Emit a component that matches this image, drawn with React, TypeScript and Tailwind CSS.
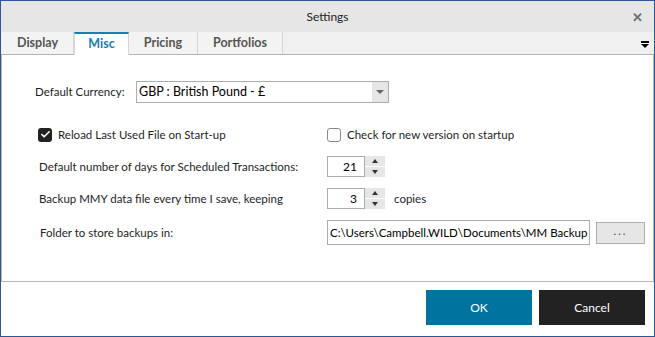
import { Check } from "lucide-react";

const tabs = ["Display", "Misc", "Pricing", "Portfolios"];

const font = { fontFamily: 'Lato, "Noto Sans", sans-serif' };

const Spinner = ({ value }: { value: string }) => {
  return (
    <div className="flex h-[21px] items-stretch">
      <div className="flex w-[38px] items-center justify-end border border-[#adadad] bg-white pr-[7px] text-[12px] text-black">
        {value}
      </div>
      <div className="flex w-[20px] flex-col bg-[#e6e6e6]">
        <div className="flex flex-1 items-center justify-center border-b border-white">
          <span className="block h-0 w-0 border-x-[3px] border-b-[4px] border-x-transparent border-b-[#333]" />
        </div>
        <div className="flex flex-1 items-center justify-center">
          <span className="block h-0 w-0 border-x-[3px] border-t-[4px] border-x-transparent border-t-[#333]" />
        </div>
      </div>
    </div>
  );
};

export default function App() {
  return (
    <div
      className="flex h-[337px] w-[655px] flex-col overflow-hidden whitespace-nowrap border border-[#2b5797] bg-white text-[11.5px] text-[#1e1e1e]"
      style={font}
    >
      {/* title bar */}
      <div className="relative flex h-[31px] flex-none items-center justify-center bg-[#e6e6e6] text-[12px] text-[#222]">
        <span>Settings</span>
        <span className="absolute right-[11px] top-[7px] text-[13px] font-bold text-[#707070]">✕</span>
      </div>

      {/* tab strip */}
      <div className="flex h-[23px] flex-none items-end border-b border-[#b4b4b4] bg-[#f0f0f0] pl-[1px]">
        {tabs.map((tab) => {
          const active = tab === "Misc";
          return (
            <div
              key={tab}
              className={
                active
                  ? "-mb-px flex h-[23px] w-[55px] items-center justify-center border-t-2 border-x border-t-[#1a7fb0] border-x-[#d6d6d6] bg-white text-[12.5px] font-bold text-[#1a7fb0]"
                  : tab === "Display"
                    ? "flex h-[22px] w-[72px] items-center justify-center border-r border-[#d6d6d6] bg-[#f3f3f3] text-[12.5px] font-bold text-[#555]"
                    : tab === "Pricing"
                      ? "flex h-[22px] w-[69px] items-center justify-center border-r border-[#d6d6d6] bg-[#f3f3f3] text-[12.5px] font-bold text-[#555]"
                      : "flex h-[22px] w-[85px] items-center justify-center border-r border-[#d6d6d6] bg-[#f3f3f3] text-[12.5px] font-bold text-[#555]"
              }
            >
              {tab}
            </div>
          );
        })}
        <div className="flex-1" />
        <div className="mb-[6px] mr-[5px] flex flex-col items-center">
          <span className="block h-[2px] w-[8px] bg-black" />
          <span className="mt-[1px] block h-0 w-0 border-x-[4px] border-t-[4px] border-x-transparent border-t-black" />
        </div>
      </div>

      {/* content */}
      <div className="flex h-[227px] flex-none flex-col border-x border-b border-[#b9b9b9] pt-[26px]">
        <div className="flex items-center">
          <span className="ml-[33px] w-[101px]">Default Currency:</span>
          <div className="flex h-[22px] w-[253px] items-stretch border border-[#adadad] bg-white">
            <span className="flex flex-1 items-center pl-[2px] text-[12.5px] text-black">GBP : British Pound - £</span>
            <span className="flex w-[16px] items-center justify-center bg-[#e6e6e6]">
              <span className="block h-0 w-0 border-x-[4px] border-t-[4px] border-x-transparent border-t-[#666]" />
            </span>
          </div>
        </div>

        <div className="mt-[23px] flex items-center">
          <div className="ml-[36px] flex w-[289px] items-center">
            <span className="flex h-[14px] w-[14px] items-center justify-center rounded-[3px] bg-[#222]">
              <Check size={11} strokeWidth={3.5} color="white" />
            </span>
            <span className="ml-[6px]">Reload Last Used File on Start-up</span>
          </div>
          <div className="flex items-center">
            <span className="h-[14px] w-[14px] rounded-[3px] border border-[#8a8a8a] bg-white" />
            <span className="ml-[6px]">Check for new version on startup</span>
          </div>
        </div>

        <div className="mt-[13px] flex items-center">
          <span className="ml-[37px] w-[288px]">Default number of days for Scheduled Transactions:</span>
          <Spinner value="21" />
        </div>

        <div className="mt-[11px] flex items-center">
          <span className="ml-[37px] w-[288px]">Backup MMY data file every time I save, keeping</span>
          <Spinner value="3" />
          <span className="ml-[9px]">copies</span>
        </div>

        <div className="mt-[11px] flex items-center">
          <span className="ml-[38px] w-[287px]">Folder to store backups in:</span>
          <div className="flex h-[25px] w-[263px] items-center overflow-hidden border border-[#adadad] bg-white pl-[2px] text-black">
            C:\Users\Campbell.WILD\Documents\MM Backup
          </div>
          <div className="ml-[6px] flex h-[22px] w-[49px] items-center justify-center border border-[#adadad] bg-[#e6e6e6] pb-[3px] text-[11px] tracking-[2px] text-[#444]">
            ...
          </div>
        </div>
      </div>

      {/* footer */}
      <div className="flex flex-1 items-start justify-end gap-[7px] pr-[9px] pt-[8px]">
        <button className="flex h-[35px] w-[106px] items-center justify-center bg-[#00749e] text-[12px] text-white">OK</button>
        <button className="flex h-[35px] w-[106px] items-center justify-center bg-[#222222] text-[12px] text-white">Cancel</button>
      </div>
    </div>
  );
}
